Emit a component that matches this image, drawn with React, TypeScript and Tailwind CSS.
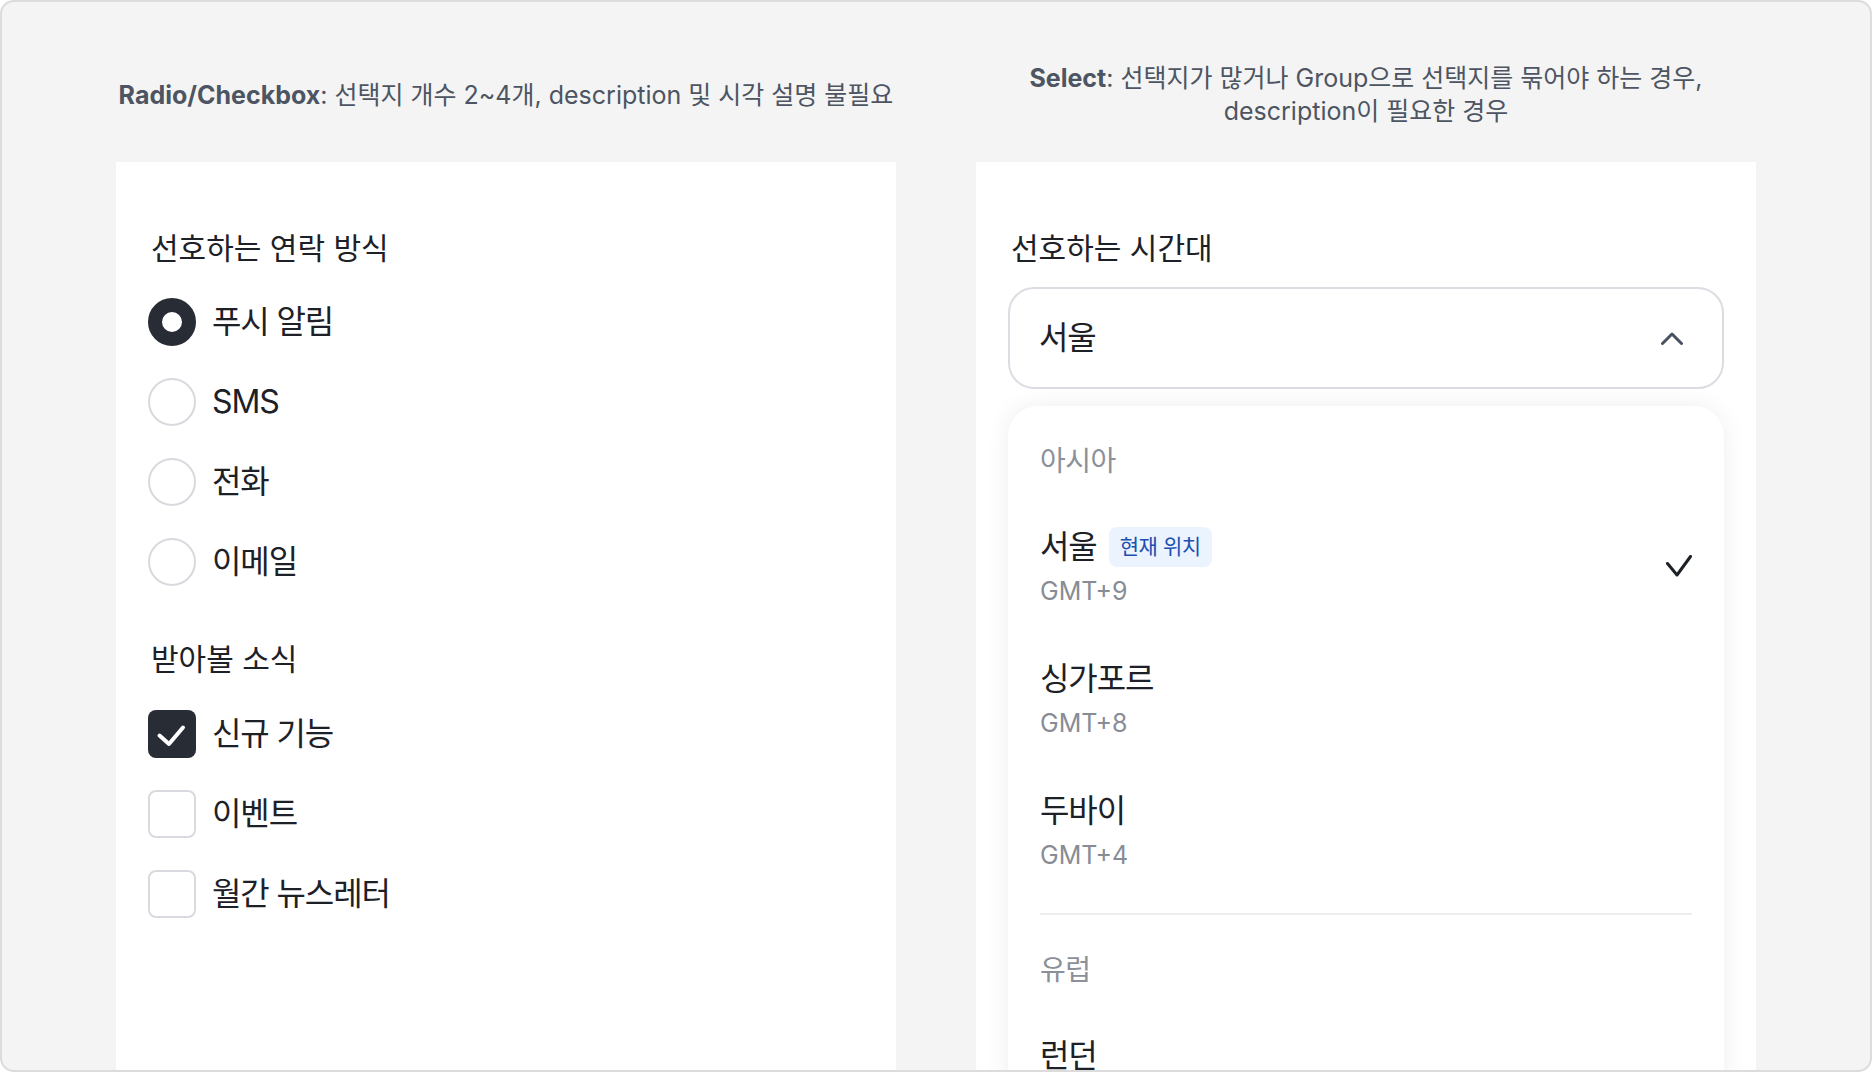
import React from "react";

const FONT = { fontFamily: "Inter, 'Noto Sans CJK KR', sans-serif" };

function Radio({ checked, label }: { checked?: boolean; label: string }) {
  return (
    <div className="flex h-[48px] items-center gap-[16px]">
      {checked ? (
        <div className="h-[48px] w-[48px] shrink-0 rounded-full border-[14px] border-[#272c35] bg-white" />
      ) : (
        <div className="h-[48px] w-[48px] shrink-0 rounded-full border-2 border-[#d9dadf] bg-white" />
      )}
      <span className="text-[32px] leading-[44px] tracking-[-0.035em] text-[#1d2127]">{label}</span>
    </div>
  );
}

function Checkbox({ checked, label }: { checked?: boolean; label: string }) {
  return (
    <div className="flex h-[48px] items-center gap-[16px]">
      {checked ? (
        <div className="flex h-[48px] w-[48px] shrink-0 items-center justify-center rounded-[8px] bg-[#272c35]">
          <svg width="48" height="48" viewBox="0 0 48 48" fill="none">
            <path d="M11.5 25.5 L21 34 L35 17.5" stroke="white" strokeWidth="4" strokeLinecap="round" strokeLinejoin="round" />
          </svg>
        </div>
      ) : (
        <div className="h-[48px] w-[48px] shrink-0 rounded-[8px] border-2 border-[#d9dadf] bg-white" />
      )}
      <span className="text-[32px] leading-[44px] tracking-[-0.035em] text-[#1d2127]">{label}</span>
    </div>
  );
}

function Option({ name, tz, badge, selected }: { name: string; tz: string; badge?: string; selected?: boolean }) {
  return (
    <div className="flex items-center justify-between py-[22px]">
      <div className="flex flex-col">
        <div className="flex h-[44px] items-center gap-[12px]">
          <span className="text-[32px] leading-[44px] tracking-[-0.035em] text-[#1d2127]">{name}</span>
          {badge && (
            <span className="flex h-[40px] items-center rounded-[8px] bg-[#ebf3fe] px-[11px] text-[21px] leading-[40px] tracking-[-0.02em] text-[#1b4fb0]">
              {badge}
            </span>
          )}
        </div>
        <span className="text-[25px] leading-[44px] text-[#878c95]">{tz}</span>
      </div>
      {selected && (
        <svg width="26" height="22" viewBox="0 0 26 22" fill="none" className="mb-[6px]">
          <path d="M1.5 8.5 L11 20 L24.5 1.5" stroke="#1d2127" strokeWidth="3" strokeLinecap="round" strokeLinejoin="round" />
        </svg>
      )}
    </div>
  );
}

export default function App() {
  return (
    <div style={FONT} className="flex h-[1072px] w-[1872px] flex-col overflow-hidden rounded-[14px] border-2 border-[#dcdcdc] bg-[#f4f4f4] pt-[60px]">
      <div className="flex items-center justify-center gap-[80px]">
        <p className="w-[780px] text-center text-[25px] leading-[33px] text-[#4d5562]">
          <b className="font-bold">Radio/Checkbox</b>: 선택지 개수 2~4개, description 및 시각 설명 불필요
        </p>
        <p className="w-[780px] text-center text-[25px] leading-[33px] text-[#4d5562]">
          <b className="font-bold">Select</b>: 선택지가 많거나 Group으로 선택지를 묶어야 하는 경우,
          <br />
          description이 필요한 경우
        </p>
      </div>

      <div className="mt-[34px] flex flex-1 justify-center gap-[80px]">
        <div className="w-[780px] bg-white px-8 pt-[66px]">
          <h3 className="pl-[3px] text-[30px] font-normal leading-[40px] text-[#1d2127]">선호하는 연락 방식</h3>
          <div className="mt-[30px] flex flex-col gap-[32px]">
            <Radio checked label="푸시 알림" />
            <Radio label="SMS" />
            <Radio label="전화" />
            <Radio label="이메일" />
          </div>
          <h3 className="mt-[53px] pl-[3px] text-[30px] font-normal leading-[40px] text-[#1d2127]">받아볼 소식</h3>
          <div className="mt-[31px] flex flex-col gap-[32px]">
            <Checkbox checked label="신규 기능" />
            <Checkbox label="이벤트" />
            <Checkbox label="월간 뉴스레터" />
          </div>
        </div>

        <div className="w-[780px] bg-white px-8 pt-[66px]">
          <h3 className="pl-[3px] text-[30px] font-normal leading-[40px] text-[#1d2127]">선호하는 시간대</h3>
          <div className="mt-[19px] flex h-[102px] items-center justify-between rounded-[26px] border-2 border-[#dcdde3] bg-white pl-[29px] pr-[39px]">
            <span className="text-[32px] leading-[44px] tracking-[-0.035em] text-[#1d2127]">서울</span>
            <svg width="22" height="13" viewBox="0 0 22 13" fill="none">
              <path d="M1.5 11.5 L11 2 L20.5 11.5" stroke="#4a5160" strokeWidth="3" strokeLinecap="round" strokeLinejoin="round" />
            </svg>
          </div>
          <div className="mt-[17px] rounded-t-[30px] bg-white px-8 pt-[33px] pb-[40px] shadow-[0_0_24px_rgba(0,0,0,0.07)]">
            <div className="text-[28px] leading-[44px] tracking-[-0.02em] text-[#8b9099]">아시아</div>
            <div className="mt-[20px]">
              <Option name="서울" tz="GMT+9" badge="현재 위치" selected />
              <Option name="싱가포르" tz="GMT+8" />
              <Option name="두바이" tz="GMT+4" />
            </div>
            <div className="mt-[14px] h-[2px] bg-[#eeeeee]" />
            <div className="pt-[33px] text-[28px] leading-[44px] tracking-[-0.02em] text-[#8b9099]">유럽</div>
            <div className="mt-[20px]">
              <Option name="런던" tz="GMT+0" />
            </div>
          </div>
        </div>
      </div>
    </div>
  );
}
